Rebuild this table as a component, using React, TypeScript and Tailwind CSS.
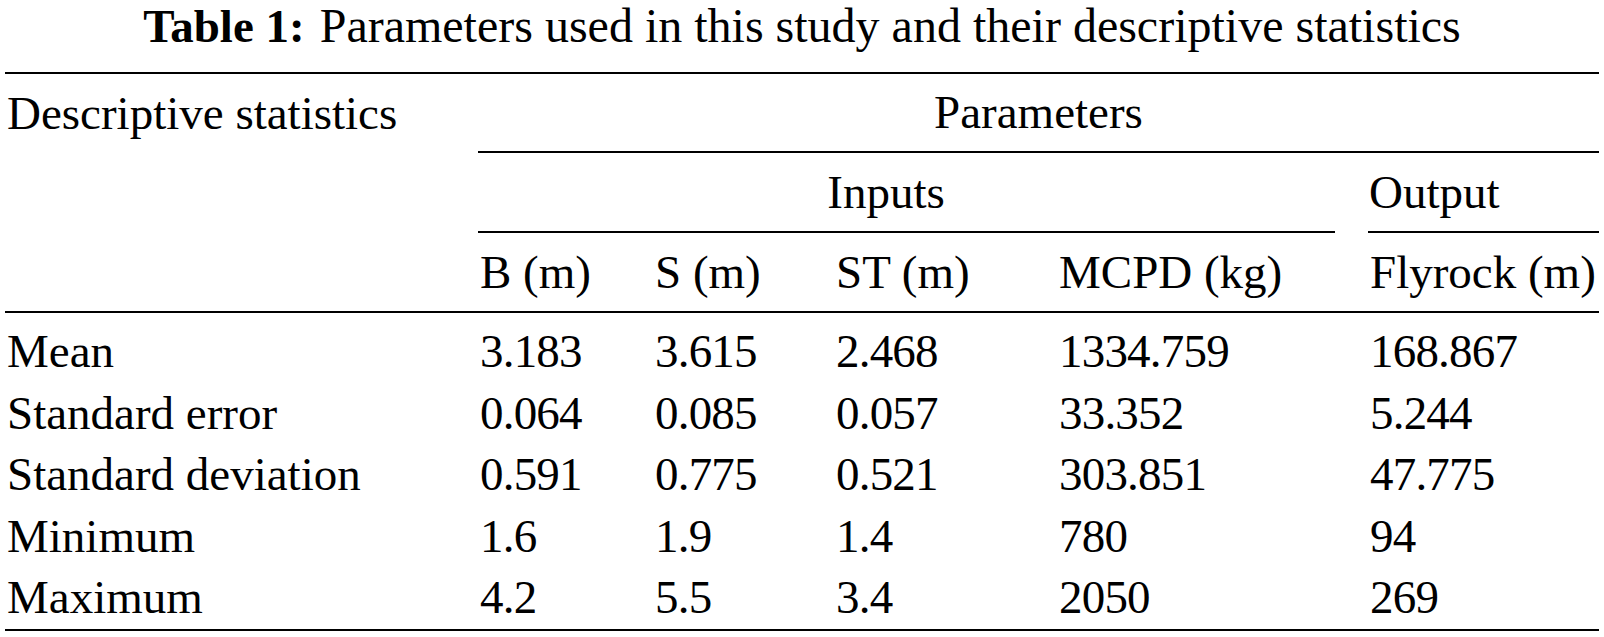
const rows: string[][] = [
  ["Mean", "3.183", "3.615", "2.468", "1334.759", "168.867"],
  ["Standard error", "0.064", "0.085", "0.057", "33.352", "5.244"],
  ["Standard deviation", "0.591", "0.775", "0.521", "303.851", "47.775"],
  ["Minimum", "1.6", "1.9", "1.4", "780", "94"],
  ["Maximum", "4.2", "5.5", "3.4", "2050", "269"],
];

const heads = ["B (m)", "S (m)", "ST (m)", "MCPD (kg)", "Flyrock (m)"];

const cols = "grid grid-cols-[473px_175px_181px_223px_311px_231px]";

export default function App() {
  return (
    <div className="w-[1604px] h-[637px] bg-white text-black px-[5px] font-['Liberation_Serif','Times_New_Roman',serif] text-[47px] leading-none">
      {/* caption */}
      <div className="h-[72px] leading-[52px] text-center whitespace-nowrap">
        <span className="font-bold">Table 1:</span>
        <span className="ml-[15px] text-[48px]">Parameters used in this study and their descriptive statistics</span>
      </div>

      <div className="border-t-2 border-black">
        {/* header rows */}
        <div className={cols}>
          <div className="h-[79px] flex items-center pl-[2px] whitespace-nowrap">Descriptive statistics</div>
          <div className="col-span-5 flex items-center justify-center border-b-2 border-black">Parameters</div>

          <div />
          <div className="col-span-4 mr-[33px] h-[80px] flex items-center border-b-2 border-black">
            <span className="w-[816px] text-center">Inputs</span>
          </div>
          <div className="flex items-center pl-[1px] border-b-2 border-black">Output</div>
        </div>

        <div className={`${cols} border-b-2 border-black`}>
          <div className="h-[78px]" />
          {heads.map((h) => (
            <div key={h} className="flex items-center pl-[2px] whitespace-nowrap">
              {h}
            </div>
          ))}
        </div>

        {/* body */}
        <div className="pt-[8px] border-b-2 border-black">
          {rows.map((r) => (
            <div key={r[0]} className={cols}>
              {r.map((c, i) => (
                <div
                  key={i}
                  className={
                    i === 0
                      ? "h-[61.5px] flex items-center pl-[2px] whitespace-nowrap"
                      : "h-[61.5px] flex items-center pl-[2px] whitespace-nowrap tracking-[-0.8px]"
                  }
                >
                  {c}
                </div>
              ))}
            </div>
          ))}
        </div>
      </div>
    </div>
  );
}
